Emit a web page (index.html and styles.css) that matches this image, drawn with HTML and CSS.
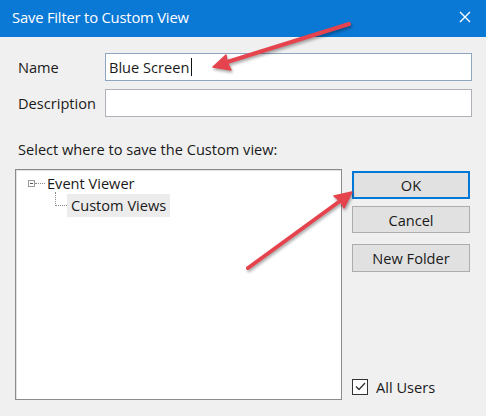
FILE: index.html
```html
<!DOCTYPE html>
<html>
<head>
<meta charset="utf-8">
<link rel="stylesheet" href="styles.css">
</head>
<body>
<div class="dialog">
  <div class="titlebar">
    <span class="title">Save Filter to Custom View</span>
    <svg class="close" width="12" height="12" viewBox="0 0 12 12"><path d="M1 1L11 11M11 1L1 11" stroke="#fff" stroke-width="1.4" fill="none"/></svg>
  </div>
  <div class="content">
    <div class="field">
      <span class="label">Name</span>
      <div class="input focused"><span class="value">Blue Screen</span><span class="caret"></span></div>
    </div>
    <div class="field">
      <span class="label">Description</span>
      <div class="input"></div>
    </div>
    <div class="prompt">Select where to save the Custom view:</div>
    <div class="main">
      <div class="tree">
        <div class="node root">
          <span class="expander"><span class="minus"></span></span>
          <span class="dots"></span>
          <span class="node-text">Event Viewer</span>
        </div>
        <div class="node child">
          <span class="elbow"></span>
          <span class="node-text selected">Custom Views</span>
        </div>
      </div>
      <div class="side">
        <button class="btn default">OK</button>
        <button class="btn cancel">Cancel</button>
        <button class="btn folder">New Folder</button>
        <div class="spacer"></div>
        <div class="check">
          <span class="box"><svg width="13" height="13" viewBox="0 0 13 13"><path d="M2 6.5L5 9.5L11 3" stroke="#333" stroke-width="1.3" fill="none"/></svg></span>
          <span>All Users</span>
        </div>
      </div>
    </div>
  </div>
  <svg class="arrows" width="486" height="416" viewBox="0 0 486 416">
    <g class="arrow">
      <line x1="349" y1="24" x2="224" y2="63" />
      <polygon points="213,67 231,70 227,62 226,55" />
    </g>
    <g class="arrow">
      <line x1="248" y1="268" x2="340" y2="201" />
      <polygon points="352,192 344,208 340,201 334,196" />
    </g>
  </svg>
</div>
</body>
</html>
```

FILE: styles.css
```css
* { box-sizing: border-box; }
html, body { margin: 0; padding: 0; }
body {
  width: 486px;
  height: 416px;
  overflow: hidden;
  background: #f0f0f0;
  font-family: "Open Sans", "Noto Sans", "Liberation Sans", sans-serif;
  color: #1a1a1a;
}
.dialog {
  position: relative;
  width: 486px;
  height: 416px;
  background: #f0f0f0;
}
.titlebar {
  height: 37px;
  background: #0a78d5;
  display: flex;
  align-items: center;
  justify-content: space-between;
  padding: 0 15px 3px 12px;
  color: #fff;
}
.title {
  font-size: 14.8px;
  letter-spacing: -0.2px;
}
.close { display: block; }
.content {
  padding: 16px 14px 0 15px;
  font-size: 14.6px;
}
.field {
  display: flex;
  align-items: center;
  height: 28px;
  margin-bottom: 8px;
}
.label {
  width: 90px;
  padding-left: 3px;
}
.input {
  flex: 1;
  height: 28px;
  background: #fff;
  border: 1px solid #aeb2b8;
  display: flex;
  align-items: center;
  padding-left: 3px;
}
.input.focused { border-color: #8fa6c2; }
.caret {
  display: inline-block;
  width: 1px;
  height: 18px;
  background: #111;
  margin-left: 2px;
}
.prompt {
  margin-top: 22px;
  padding-left: 3px;
  height: 20px;
  line-height: 20px;
}
.main {
  display: flex;
  gap: 10px;
  margin-top: 10px;
}
.tree {
  width: 327px;
  height: 231px;
  background: #fff;
  border: 1px solid #8c8c8c;
  box-shadow: inset 1px 1px 0 #e2e2e2;
  padding-top: 3px;
}
.node {
  display: flex;
  align-items: center;
  height: 20px;
}
.root { padding-left: 12px; }
.expander {
  width: 7px;
  height: 7px;
  border: 1px solid #9a9a9a;
  display: flex;
  align-items: center;
  justify-content: center;
}
.minus { width: 3px; height: 1px; background: #555; }
.dots {
  width: 10px;
  border-top: 1px dotted #8a8a8a;
  margin-right: 2px;
}
.child { padding-left: 39px; height: 24px; }
.elbow {
  width: 12px;
  height: 14px;
  border-left: 1px dotted #8a8a8a;
  border-bottom: 1px dotted #8a8a8a;
  margin-top: -12px;
}
.selected {
  background: #ececec;
  padding: 0 4px;
  height: 23px;
  line-height: 23px;
}
.side {
  width: 118px;
  display: flex;
  flex-direction: column;
}
.btn {
  font-family: inherit;
  font-size: 14.6px;
  color: #1a1a1a;
  background: #e1e1e1;
  border: 1px solid #adadad;
  height: 28px;
  padding: 0;
  margin: 0;
}
.btn.default {
  margin-top: 2px;
  border: 2px solid #0078d7;
}
.btn.cancel { margin-top: 7px; height: 27px; }
.btn.folder { margin-top: 11px; }
.spacer { flex: 1; }
.check {
  display: flex;
  align-items: center;
  height: 17px;
  margin-bottom: 5px;
}
.box {
  width: 16px;
  height: 16px;
  border: 1px solid #333;
  background: #fff;
  display: flex;
  align-items: center;
  justify-content: center;
  margin-right: 8px;
}
.box svg { display: block; }
.arrows {
  position: absolute;
  left: 0;
  top: 0;
  pointer-events: none;
}
.arrow {
  filter: drop-shadow(1px 2px 1.5px rgba(0,0,0,0.35));
}
.arrow line {
  stroke: #e5444e;
  stroke-width: 4;
  stroke-linecap: round;
}
.arrow polygon {
  fill: #e5444e;
  stroke: #e5444e;
  stroke-width: 1.5;
  stroke-linejoin: round;
}
```
